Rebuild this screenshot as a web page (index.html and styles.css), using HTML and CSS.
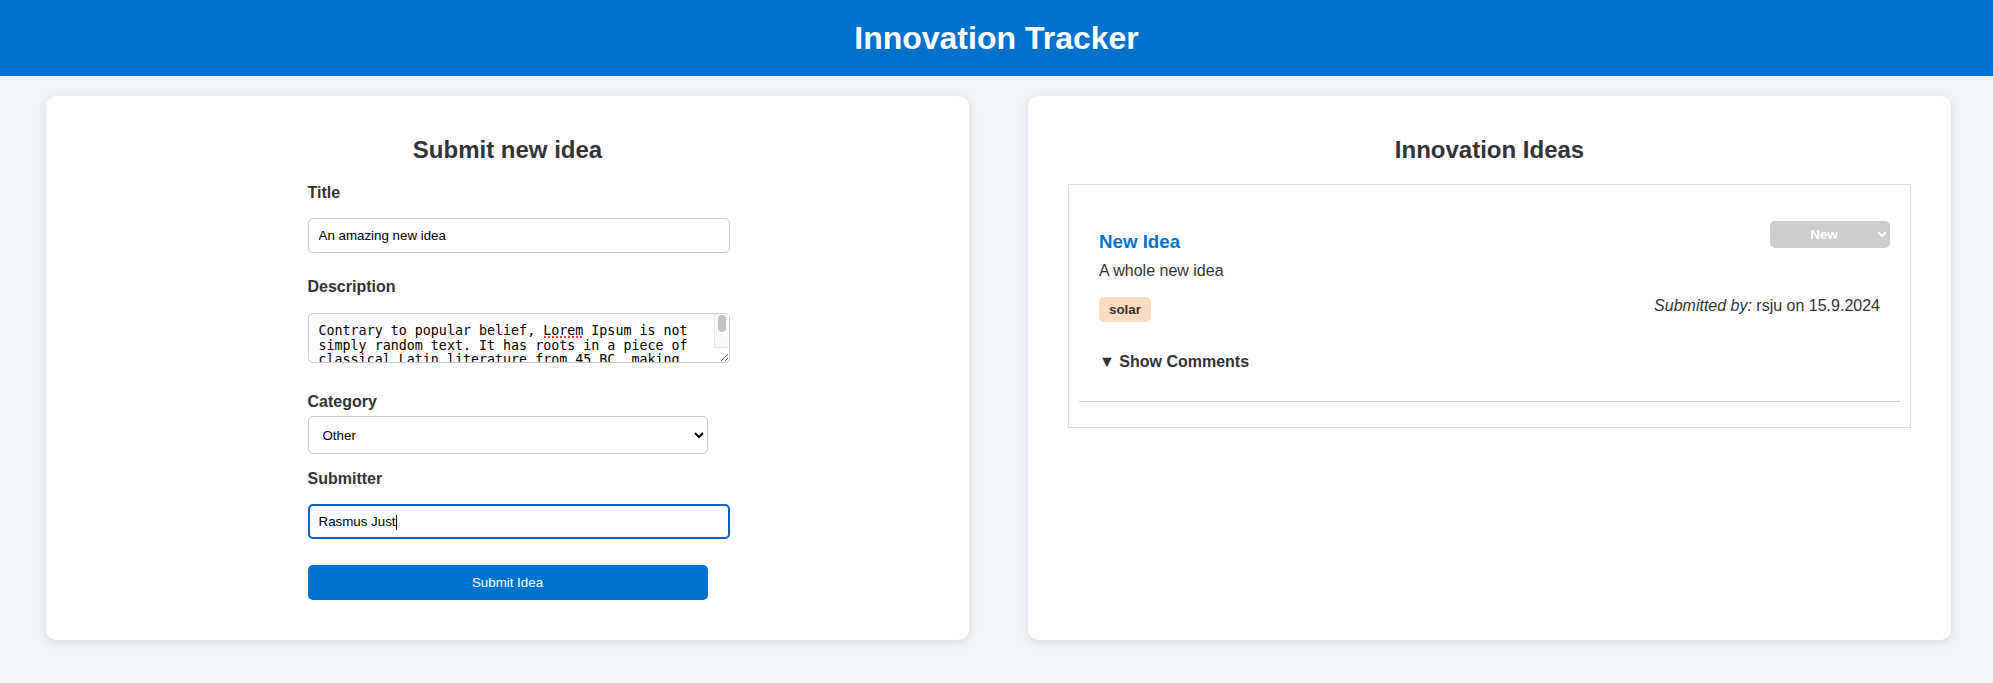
FILE: index.html
```html
<!DOCTYPE html>
<html lang="en">
<head>
<meta charset="utf-8">
<title>Innovation Tracker</title>
<link rel="stylesheet" href="styles.css">
</head>
<body>
<header class="topbar">
  <h1 class="topbar-title">Innovation Tracker</h1>
</header>
<main class="layout">
  <section class="card">
    <h2 class="card-title">Submit new idea</h2>
    <form class="idea-form">
      <label class="field-label" for="title">Title</label>
      <input class="text-input" id="title" type="text" value="An amazing new idea">
      <label class="field-label label-desc" for="desc">Description</label>
      <div class="textarea-wrap">
        <textarea class="text-area" id="desc" spellcheck="false">Contrary to popular belief, Lorem Ipsum is not simply random text. It has roots in a piece of classical Latin literature from 45 BC, making it over 2000 years old. Richard McClintock, a Latin professor at Hampden-Sydney College in Virginia, looked up one of the more obscure Latin words.</textarea>
        <span class="spell-mark"></span>
        <span class="fake-scrollbar"><span class="fake-thumb"></span></span>
      </div>
      <label class="field-label label-cat" for="cat">Category</label>
      <select class="select-input" id="cat">
        <option>Other</option>
      </select>
      <label class="field-label label-sub" for="sub">Submitter</label>
      <div class="input-wrap">
        <input class="text-input is-focused" id="sub" type="text" value="Rasmus Just">
        <span class="caret"></span>
      </div>
      <button class="submit-btn" type="button">Submit Idea</button>
    </form>
  </section>
  <section class="card">
    <h2 class="card-title">Innovation Ideas</h2>
    <div class="idea-list">
      <article class="idea-item">
        <div class="idea-head">
          <h3 class="idea-title">New Idea</h3>
          <select class="status-select">
            <option>New</option>
          </select>
        </div>
        <p class="idea-desc">A whole new idea</p>
        <div class="idea-meta">
          <span class="tag">solar</span>
          <span class="submitted"><em>Submitted by:</em> rsju on 15.9.2024</span>
        </div>
        <div class="comments-toggle">▼ Show Comments</div>
      </article>
    </div>
  </section>
</main>
</body>
</html>
```
FILE: styles.css
```css
* {
  box-sizing: border-box;
}

body {
  margin: 0;
  background: #f0f4f8;
  font-family: "Liberation Sans", Arial, sans-serif;
  color: #333;
}

.topbar {
  background: #0072ce;
  color: #fff;
  text-align: center;
  padding: 20px;
}

.topbar-title {
  margin: 0;
  font-size: 32px;
  line-height: 36px;
  font-weight: bold;
}

.layout {
  display: grid;
  grid-template-columns: 1fr 1fr;
  column-gap: 59px;
  padding: 20px 42px 20px 46px;
}

.card {
  background: #fff;
  border-radius: 10px;
  box-shadow: 0 2px 8px rgba(0, 0, 0, 0.1);
  padding: 20px 20px 40px;
}

.card-title {
  margin: 20px 0;
  font-size: 24px;
  line-height: 28px;
  text-align: center;
  color: #333;
}

.idea-form {
  width: 400px;
  margin: 0 auto;
  display: flex;
  flex-direction: column;
  align-items: flex-start;
}

.field-label {
  font-size: 16px;
  line-height: 18px;
  font-weight: bold;
  margin-bottom: 16px;
}

.label-desc {
  margin-top: 25px;
  margin-bottom: 17px;
}

.label-cat {
  margin-top: 30px;
  margin-bottom: 5px;
}

.label-sub {
  margin-top: 16px;
}

.text-input {
  width: 422px;
  height: 35px;
  padding: 0 10px;
  border: 1px solid #ccc;
  border-radius: 5px;
  font-family: "Liberation Sans", Arial, sans-serif;
  font-size: 13.33px;
  color: #000;
  background: #fff;
  outline: none;
}

.text-input.is-focused {
  border: 2px solid #0b5fcf;
  padding: 0 9px;
}

.textarea-wrap {
  position: relative;
  width: 422px;
  height: 50px;
}

.text-area {
  display: block;
  width: 422px;
  height: 50px;
  padding: 10px 25px 10px 10px;
  border: 1px solid #ccc;
  border-radius: 5px;
  font-family: "DejaVu Sans Mono", "Liberation Mono", monospace;
  font-size: 13.33px;
  line-height: 14.7px;
  color: #000;
  resize: vertical;
  overflow: hidden;
}

.spell-mark {
  position: absolute;
  left: 236px;
  top: 23px;
  width: 38px;
  height: 0;
  border-top: 2px dotted #e0443e;
}

.fake-scrollbar {
  position: absolute;
  right: 1px;
  top: 1px;
  bottom: 15px;
  width: 15px;
  background: #fafafa;
  border-left: 1px solid #e6e6e6;
  border-bottom: 1px solid #e6e6e6;
  border-top-right-radius: 4px;
}

.fake-thumb {
  position: absolute;
  left: 3px;
  top: 1px;
  width: 8px;
  height: 17px;
  border-radius: 4px;
  background: #c1c1c1;
}

.select-input {
  width: 400px;
  height: 38px;
  padding: 0 10px;
  border: 1px solid #ccc;
  border-radius: 5px;
  font-family: "Liberation Sans", Arial, sans-serif;
  font-size: 13.33px;
  color: #000;
  background: #fff;
}

.input-wrap {
  position: relative;
}

.caret {
  position: absolute;
  left: 88px;
  top: 11px;
  width: 1px;
  height: 15px;
  background: #000;
}

.submit-btn {
  margin-top: 26px;
  width: 400px;
  height: 35px;
  border: none;
  border-radius: 5px;
  background: #0072ce;
  color: #fff;
  font-family: "Liberation Sans", Arial, sans-serif;
  font-size: 13.33px;
}

.idea-list {
  margin: 0 20px;
  border: 1px solid #ddd;
  padding: 10px;
}

.idea-item {
  padding: 21px 20px 30px;
  border-bottom: 1px solid #ccc;
  margin-bottom: 15px;
}

.idea-head {
  display: flex;
  justify-content: space-between;
  align-items: flex-start;
}

.idea-title {
  margin: 15px 0 0;
  font-size: 18.72px;
  line-height: 22px;
  color: #0072ce;
}

.status-select {
  margin-top: 5px;
  margin-right: -10px;
  width: 120px;
  height: 27px;
  border: none;
  border-radius: 5px;
  background: #ccc;
  color: #fff;
  font-family: "Liberation Sans", Arial, sans-serif;
  font-size: 13.33px;
  font-weight: bold;
  text-align: center;
}

.idea-desc {
  margin: 9px 0 17px;
  font-size: 16px;
  line-height: 18px;
}

.idea-meta {
  display: flex;
  justify-content: space-between;
}

.tag {
  background: #ffdcc0;
  border-radius: 5px;
  padding: 5px 10px;
  font-size: 13.33px;
  line-height: 15px;
  font-weight: bold;
}

.submitted {
  font-size: 16px;
  line-height: 18px;
}

.comments-toggle {
  margin-top: 31px;
  font-size: 16px;
  line-height: 18px;
  font-weight: bold;
}
```
